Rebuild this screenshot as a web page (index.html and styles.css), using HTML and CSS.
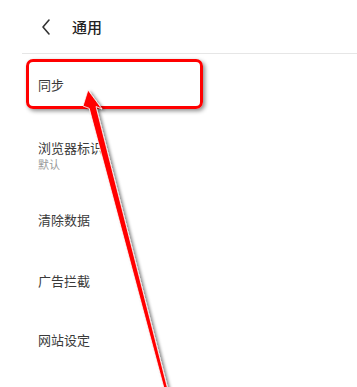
FILE: index.html
```html
<!DOCTYPE html>
<html lang="zh-CN">
<head>
    <meta charset="UTF-8">
    <meta name="viewport" content="width=device-width, initial-scale=1.0">
    <title>通用</title>
    <link rel="stylesheet" href="styles.css">
</head>
<body>
    <div class="page">
        <div class="header">
            <svg class="back" width="12" height="18" viewBox="0 0 12 18">
                <path d="M9 2 L3 9 L9 16" fill="none" stroke="#333" stroke-width="1.6" stroke-linecap="round" stroke-linejoin="round"/>
            </svg>
            <div class="header-title">通用</div>
        </div>

        <div class="list">
            <div class="row row-first">
                <div class="row-title">同步</div>
            </div>
            <div class="row row-double">
                <div class="row-title">浏览器标识</div>
                <div class="row-sub">默认</div>
            </div>
            <div class="row">
                <div class="row-title">清除数据</div>
            </div>
            <div class="row row-tall">
                <div class="row-title">广告拦截</div>
            </div>
            <div class="row row-short">
                <div class="row-title">网站设定</div>
            </div>
        </div>

        <!-- annotation drawn over the screenshot -->
        <div class="highlight"></div>
        <svg class="arrow" width="357" height="387" viewBox="0 0 357 387">
            <defs>
                <filter id="shadow" x="-20%" y="-5%" width="140%" height="110%">
                    <feDropShadow dx="2.5" dy="1.5" stdDeviation="1.6" flood-color="#000" flood-opacity="0.45"/>
                </filter>
            </defs>
            <polygon points="88,90 102,109 96,106.5 168.5,392 165,392 89.2,108.3 83,106"
                     fill="#ff0000" stroke="#ffffff" stroke-width="0.8" stroke-linejoin="miter" filter="url(#shadow)"/>
        </svg>
    </div>
</body>
</html>
```

FILE: styles.css
```css
body {
    margin: 0;
    background-color: #ffffff;
    font-family: "Noto Sans CJK SC", "Noto Sans", sans-serif;
    color: #333;
}

.page {
    position: relative;
    width: 357px;
    height: 387px;
    overflow: hidden;
}

.header {
    display: flex;
    align-items: center;
    height: 54px;
    margin-left: 22px;
    border-bottom: 1px solid #e6e6e6;
    box-sizing: border-box;
}

.back {
    margin-left: 18px;
    margin-right: 20px;
}

.header-title {
    font-size: 15px;
    font-weight: 500;
    color: #222;
}

.list {
    padding-left: 38px;
}

.row {
    display: flex;
    flex-direction: column;
    justify-content: center;
    height: 60px;
}

.row-first {
    height: 62px;
}

.row-double {
    height: 74px;
    padding-top: 4px;
    box-sizing: border-box;
}

.row-tall {
    height: 61px;
}

.row-short {
    height: 57px;
}

.row-title {
    font-size: 13px;
    line-height: 18px;
    color: #3a3a3a;
}

.row-sub {
    font-size: 11px;
    line-height: 14px;
    color: #999;
}

.highlight {
    position: absolute;
    left: 26px;
    top: 59px;
    width: 177px;
    height: 50px;
    border: 3px solid #ff0000;
    border-radius: 7px;
    box-sizing: border-box;
    box-shadow: 2px 2px 4px rgba(0, 0, 0, 0.45);
}

.arrow {
    position: absolute;
    left: 0;
    top: 0;
}
```
